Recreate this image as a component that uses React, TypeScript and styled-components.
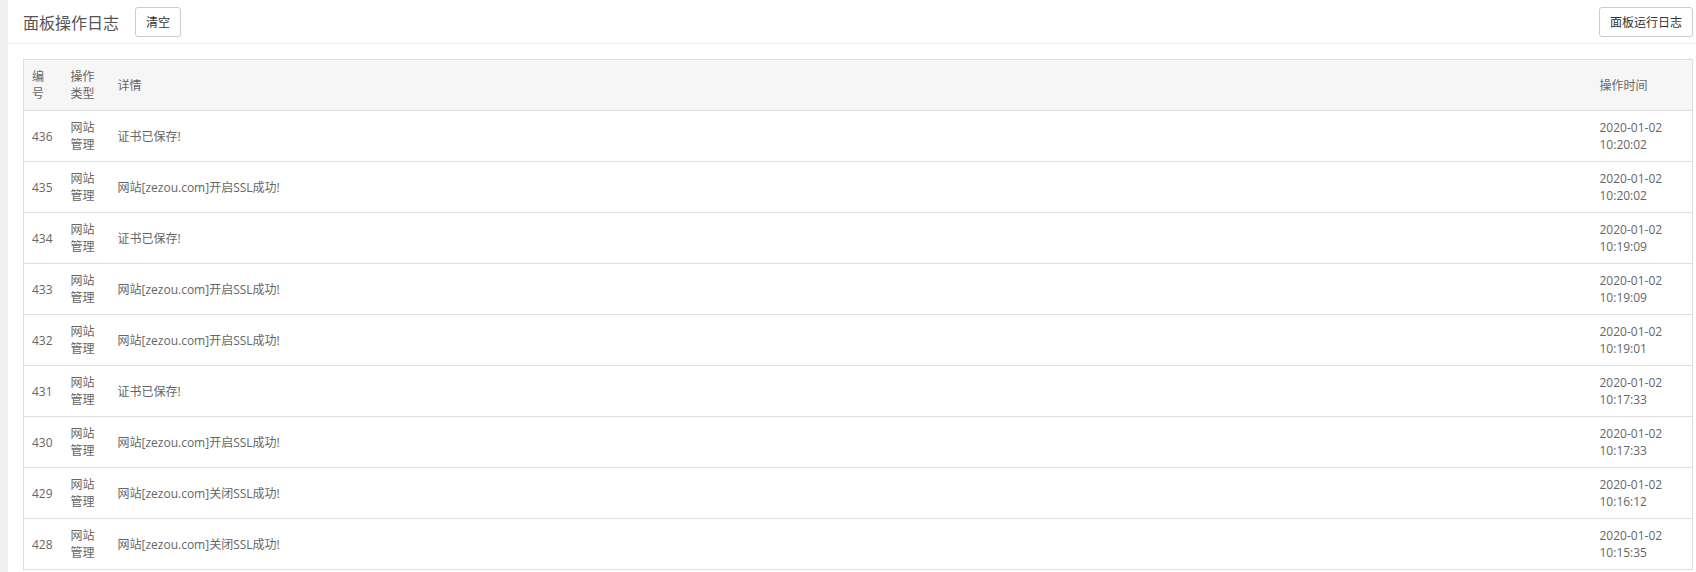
import React from 'react';
import styled, { createGlobalStyle } from 'styled-components';

const GlobalStyle = createGlobalStyle`
  html, body {
    margin: 0;
    padding: 0;
    background: #f0f0f0;
    height: 572px;
    overflow: hidden;
  }
  body {
    font-family: "Open Sans", "Noto Sans CJK SC", sans-serif;
    font-size: 12px;
    color: #666;
  }
`;

const Panel = styled.div`
  margin-left: 8px;
  background: #fff;
  min-height: 572px;
`;

const HeaderBar = styled.div`
  display: flex;
  align-items: center;
  justify-content: space-between;
  height: 43px;
  padding: 0 3px 0 15px;
  border-bottom: 1px solid #ececec;
`;

const TitleGroup = styled.div`
  display: flex;
  align-items: center;
  gap: 16px;
`;

const Title = styled.span`
  font-family: "Noto Sans CJK SC", sans-serif;
  font-size: 16px;
  color: #555;
`;

const Button = styled.button`
  height: 30px;
  padding: 0 10px;
  background: #fff;
  border: 1px solid #ccc;
  border-radius: 3px;
  font-family: "Noto Sans CJK SC", sans-serif;
  font-size: 12px;
  color: #333;
  cursor: pointer;
`;

const Body = styled.div`
  padding: 15px 3px 0 15px;
`;

const Table = styled.table`
  width: 100%;
  table-layout: fixed;
  border-collapse: collapse;
  border: 1px solid #ddd;
`;

const Th = styled.th`
  background: #f6f6f6;
  font-weight: normal;
  text-align: left;
  padding: 8px;
  line-height: 17px;
  height: 34px;
  border-bottom: 1px solid #ddd;
  vertical-align: middle;
  word-break: break-all;
  color: #666;
`;

const Td = styled.td`
  padding: 8px;
  line-height: 17px;
  height: 34px;
  border-bottom: 1px solid #ddd;
  vertical-align: middle;
  word-break: break-all;
`;

const Line = styled.span`
  display: block;
  white-space: nowrap;
`;

const SSL_ON = '网站[zezou.com]开启SSL成功!';
const SSL_OFF = '网站[zezou.com]关闭SSL成功!';
const CERT = '证书已保存!';

const logs = [
  { id: 436, detail: CERT, time: '10:20:02' },
  { id: 435, detail: SSL_ON, time: '10:20:02' },
  { id: 434, detail: CERT, time: '10:19:09' },
  { id: 433, detail: SSL_ON, time: '10:19:09' },
  { id: 432, detail: SSL_ON, time: '10:19:01' },
  { id: 431, detail: CERT, time: '10:17:33' },
  { id: 430, detail: SSL_ON, time: '10:17:33' },
  { id: 429, detail: SSL_OFF, time: '10:16:12' },
  { id: 428, detail: SSL_OFF, time: '10:15:35' },
];

export default function App() {
  return (
    <>
      <GlobalStyle />
      <Panel>
        <HeaderBar>
          <TitleGroup>
            <Title>面板操作日志</Title>
            <Button>清空</Button>
          </TitleGroup>
          <Button>面板运行日志</Button>
        </HeaderBar>
        <Body>
          <Table>
            <colgroup>
              <col style={{ width: 39 }} />
              <col style={{ width: 47 }} />
              <col />
              <col style={{ width: 101 }} />
            </colgroup>
            <thead>
              <tr>
                <Th>
                  <Line>编</Line>
                  <Line>号</Line>
                </Th>
                <Th>
                  <Line>操作</Line>
                  <Line>类型</Line>
                </Th>
                <Th>详情</Th>
                <Th>操作时间</Th>
              </tr>
            </thead>
            <tbody>
              {logs.map((log) => (
                <tr key={log.id}>
                  <Td>{log.id}</Td>
                  <Td>
                    <Line>网站</Line>
                    <Line>管理</Line>
                  </Td>
                  <Td>{log.detail}</Td>
                  <Td>
                    <Line>2020-01-02</Line>
                    <Line>{log.time}</Line>
                  </Td>
                </tr>
              ))}
            </tbody>
          </Table>
        </Body>
      </Panel>
    </>
  );
}
